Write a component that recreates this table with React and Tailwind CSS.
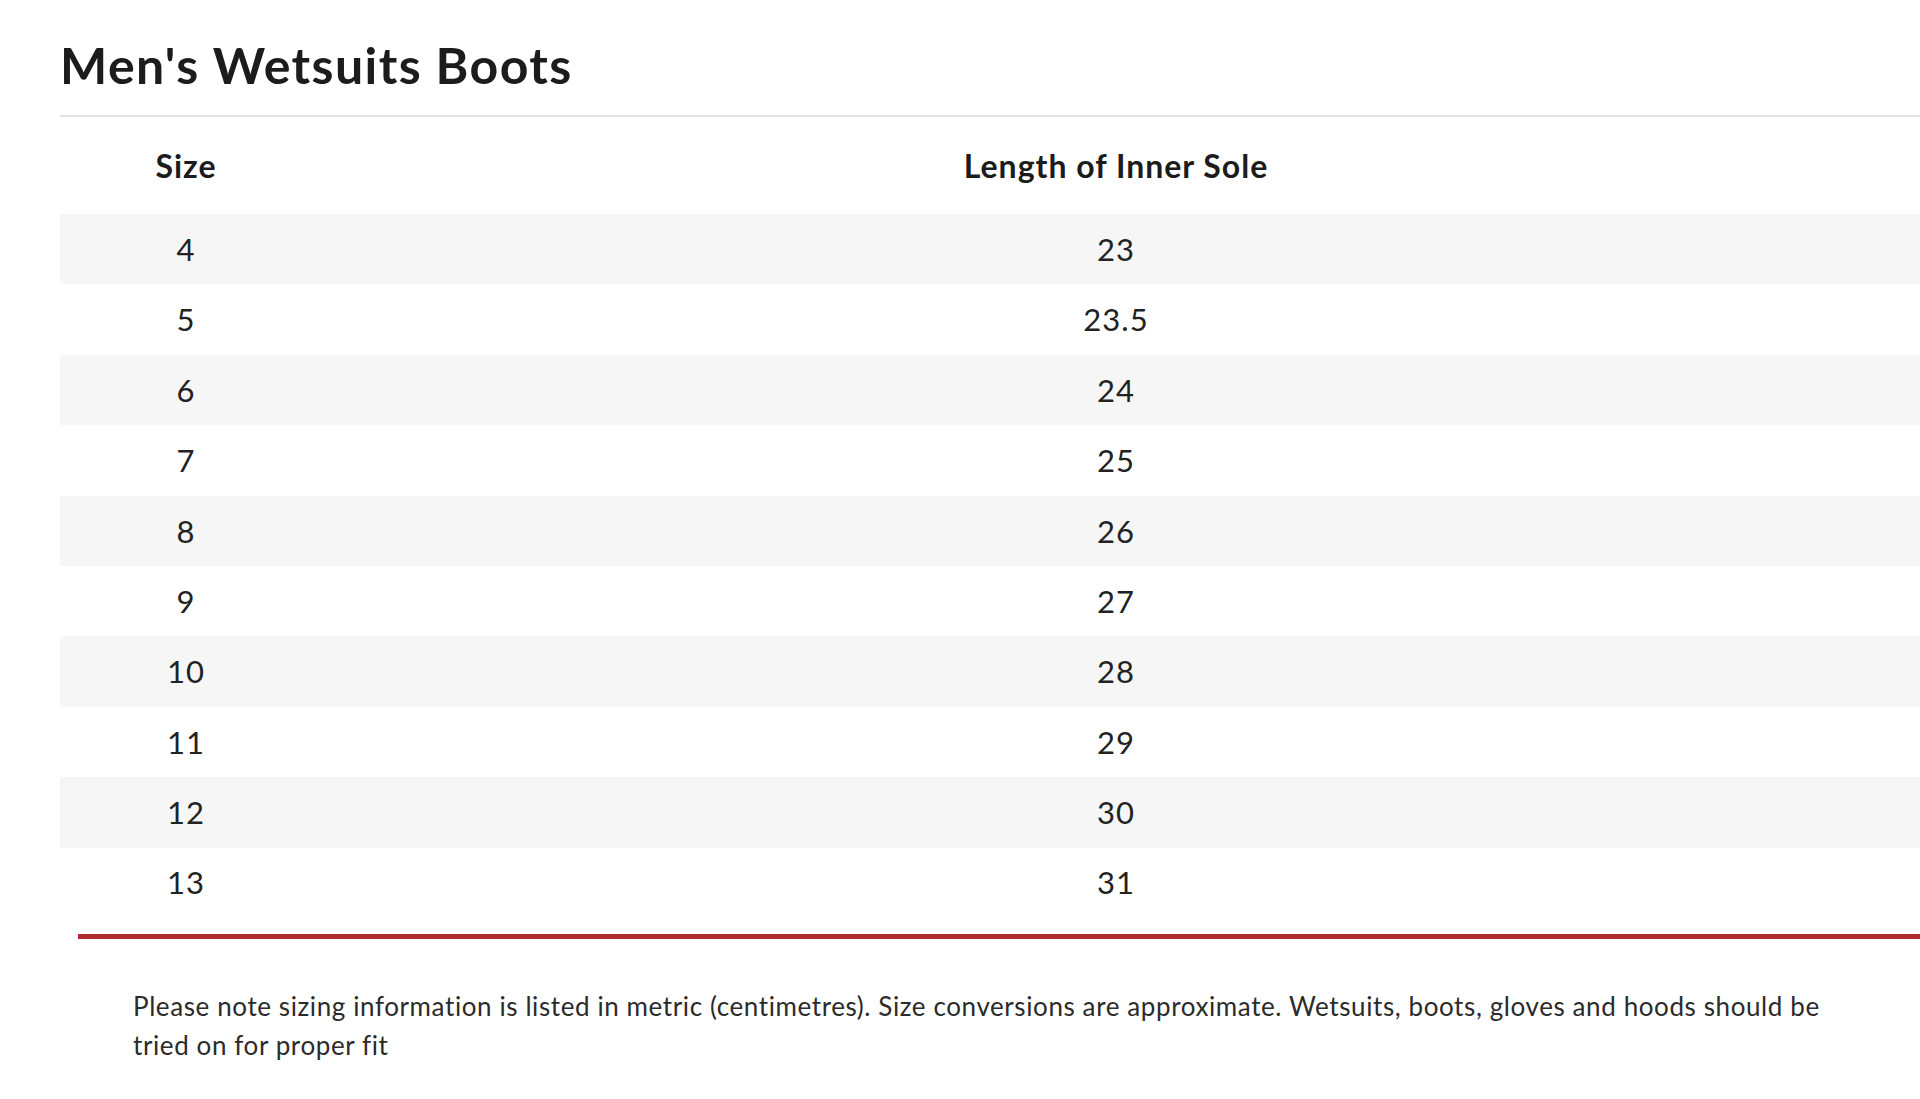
export default function App() {
  const rows = [
    ["4", "23"],
    ["5", "23.5"],
    ["6", "24"],
    ["7", "25"],
    ["8", "26"],
    ["9", "27"],
    ["10", "28"],
    ["11", "29"],
    ["12", "30"],
    ["13", "31"],
  ];
  return (
    <div className="min-h-[1099px] bg-white text-[#1f1f1f] font-['Lato','Liberation_Sans',sans-serif]">
      <div className="pl-[60px]">
        <h1 className="pt-[33px] pb-[18px] text-[50px] leading-[64px] font-bold text-[#1c1c1c] tracking-[1.4px]">
          Men's Wetsuits Boots
        </h1>
        <div className="h-[2px] bg-[#e2e2e2]" />
        <div className="flex h-[97px] items-center text-[32px] font-bold tracking-[1px] text-[#1c1c1c]">
          <div className="w-[252px] text-center">Size</div>
          <div className="flex-1 text-center">Length of Inner Sole</div>
        </div>
        {rows.map(([s, l], i) => (
          <div
            key={s}
            className={`flex h-[70.4px] items-center text-[31px] tracking-[1px] text-[#222] ${i % 2 === 0 ? "bg-[#f6f6f6]" : "bg-white"}`}
          >
            <div className="w-[252px] text-center">{s}</div>
            <div className="flex-1 text-center">{l}</div>
          </div>
        ))}
      </div>
      <div className="mt-[16px] ml-[78px] h-[5px] bg-[#b1282d]" />
      <p className="pl-[133px] pr-[60px] pt-[48px] text-[26px] leading-[39px] tracking-[0.6px] text-[#2b2b2b]">
        Please note sizing information is listed in metric (centimetres). Size conversions are approximate. Wetsuits, boots, gloves and hoods should be tried on for proper fit
      </p>
    </div>
  );
}
